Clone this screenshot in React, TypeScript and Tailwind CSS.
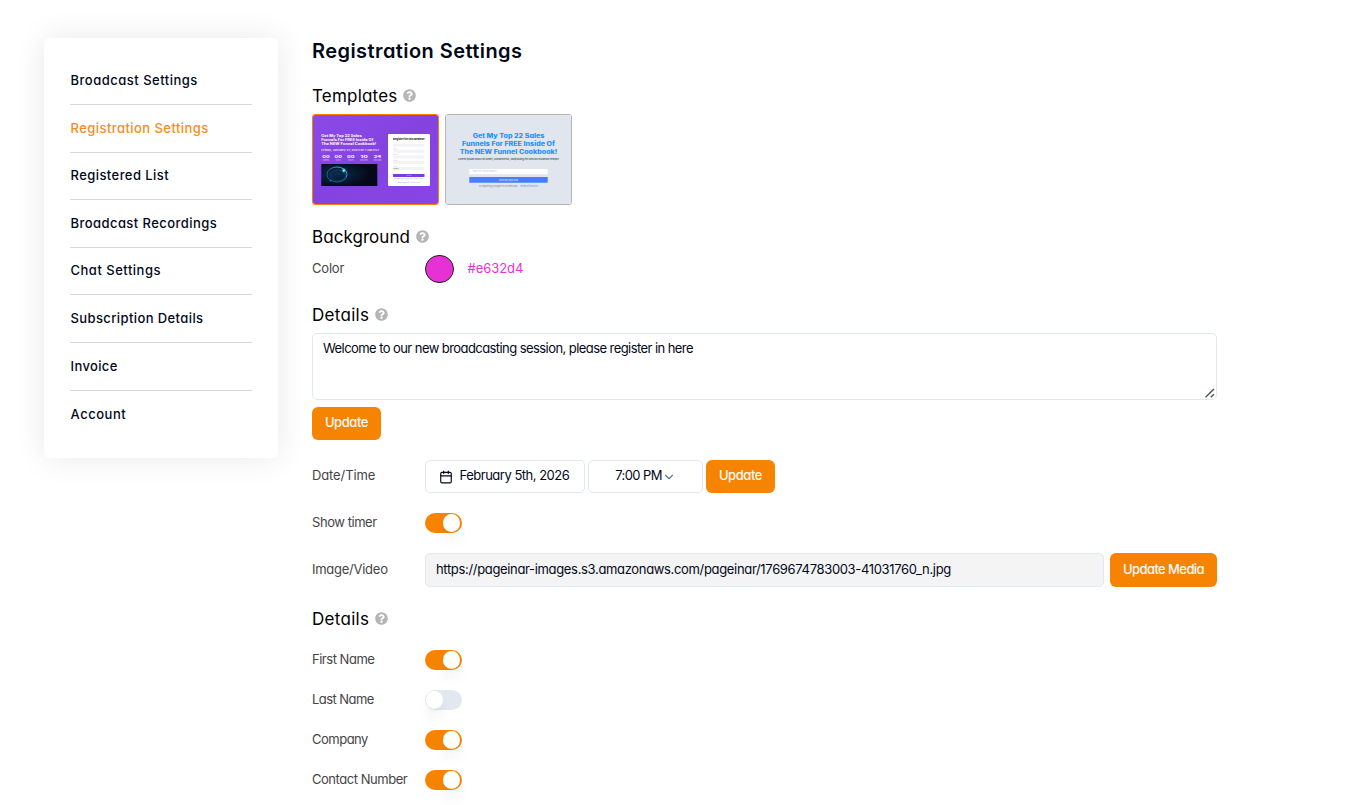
import { useState } from 'react'
import { Calendar, ChevronDown } from 'lucide-react'
import { FaQuestionCircle } from 'react-icons/fa'

const NAV_ITEMS = [
  { label: 'Broadcast Settings',    tracking: 'tracking-[0.5px]'  },
  { label: 'Registration Settings', tracking: 'tracking-[0.44px]' },
  { label: 'Registered List',       tracking: 'tracking-[0.43px]' },
  { label: 'Broadcast Recordings',  tracking: 'tracking-[0.44px]' },
  { label: 'Chat Settings',         tracking: 'tracking-[0.5px]'  },
  { label: 'Subscription Details',  tracking: 'tracking-[0.4px]'  },
  { label: 'Invoice',               tracking: 'tracking-[0.36px]' },
  { label: 'Account',               tracking: 'tracking-[0.52px]' },
]

const FIELDS = [
  { label: 'First Name',     on: true,  tracking: 'tracking-[-0.48px]' },
  { label: 'Last Name',      on: false, tracking: 'tracking-[-0.55px]' },
  { label: 'Company',        on: true,  tracking: 'tracking-[-0.5px]'  },
  { label: 'Contact Number', on: true,  tracking: 'tracking-[-0.46px]' },
]

const Heading = ({ children, className }: { children: string; className: string }) => (
  <h2 className="flex h-6 items-center gap-1.5 text-[17px] leading-6 text-black">
    <span className={className}>{children}</span>
    <FaQuestionCircle className="mb-px size-[13px] text-[#b5b5b5]" />
  </h2>
)

const Label = ({ children, className }: { children: string; className: string }) => (
  <span className={`w-[113px] shrink-0 whitespace-nowrap text-[#454545] ${className}`}>{children}</span>
)

const Button = ({ children, className }: { children: string; className: string }) => (
  <button className={`h-full shrink-0 rounded-md bg-[#f78400] pb-px text-center font-medium text-slate-50 ${className}`}>{children}</button>
)

const Toggle = ({ initial }: { initial: boolean }) => {
  const [on, setOn] = useState(initial)
  return (
    <button role="switch" aria-checked={on} onClick={() => setOn(!on)}
      className={`flex h-5 w-[37px] items-center rounded-full transition-colors ${on ? 'justify-end bg-[#f78400] pr-[2px]' : 'justify-start bg-slate-200 pl-px'}`}>
      <span className="size-[17.4px] rounded-full bg-white shadow-lg" />
    </button>
  )
}

const COUNTDOWN = [
  { x: 14, value: '00', unit: 'Weeks' },
  { x: 26.3, value: '00', unit: 'Days' },
  { x: 38.7, value: '00', unit: 'Hours' },
  { x: 52, value: '10', unit: 'Minutes' },
  { x: 65.5, value: '24', unit: 'Seconds' },
]

const PurpleTemplate = () => (
  <svg viewBox="1 1 125 89" className="size-full font-['Inter']">
    <defs>
      <radialGradient id="orb" cx="0.28" cy="0.45" r="0.6">
        <stop offset="0" stopColor="#0a2c4c" />
        <stop offset="0.5" stopColor="#071b34" />
        <stop offset="1" stopColor="#050817" />
      </radialGradient>
      <linearGradient id="ring" x1="1" y1="0" x2="0" y2="1">
        <stop offset="0" stopColor="#3fd5ee" />
        <stop offset="0.5" stopColor="#1a6d9c" />
        <stop offset="1" stopColor="#174a8c" />
      </linearGradient>
      <linearGradient id="purple" x1="0" y1="0" x2="1" y2="1">
        <stop offset="0" stopColor="#8c49e9" />
        <stop offset="0.5" stopColor="#8443df" />
        <stop offset="1" stopColor="#8945e6" />
      </linearGradient>
    </defs>
    <rect width="127" height="91" fill="url(#purple)" />
    <g fill="#f3eafd" fontSize="3.3" fontWeight="800">
      <text x="9.3" y="23.2" textLength="40.5" lengthAdjust="spacingAndGlyphs">Get My Top 22 Sales</text>
      <text x="9.3" y="27.3" textLength="52" lengthAdjust="spacingAndGlyphs">Funnels For FREE Inside Of</text>
      <text x="9.3" y="31.4" textLength="55" lengthAdjust="spacingAndGlyphs">The NEW Funnel Cookbook!</text>
      <text x="9.3" y="37.4" fontSize="2.6" fontWeight="600" textLength="58" lengthAdjust="spacingAndGlyphs">Friday, January 27, 2023 at 7 AM PST</text>
    </g>
    {COUNTDOWN.map(c => (
      <g key={c.x} fill="#f3eafd" textAnchor="middle">
        <text x={c.x} y="44" fontSize="4" fontWeight="800" textLength="7.5" lengthAdjust="spacingAndGlyphs">{c.value}</text>
        <text x={c.x} y="46.9" fontSize="2" opacity="0.65">{c.unit}</text>
      </g>
    ))}
    <rect x="9.3" y="50" width="56" height="22" fill="url(#orb)" />
    <ellipse cx="25" cy="60.5" rx="10" ry="7.5" fill="none" stroke="url(#ring)" strokeWidth="1" />
    <ellipse cx="26" cy="61.5" rx="7.5" ry="5.5" fill="none" stroke="#155a7e" strokeWidth="0.5" />
    <circle cx="31.8" cy="56.5" r="2.2" fill="#2fc7e8" opacity="0.5" />
    <circle cx="31.8" cy="56.5" r="1" fill="#b9f5ff" />
    <circle cx="18.5" cy="66.5" r="1" fill="#2a83e0" opacity="0.7" />
    <rect x="76" y="20" width="42" height="52" rx="1" fill="#fff" />
    <text x="81" y="26.4" fontSize="2.6" fontWeight="800" fill="#222" textLength="31.5" lengthAdjust="spacingAndGlyphs">Register for this webinar</text>
    {[29.7, 35.7, 41.4, 47, 53].map(y => (
      <rect key={y} x="81" y={y} width="31.5" height="3" rx="0.4" fill="#f3f3f6" />
    ))}
    {[34.7, 40.4, 46, 51.9].map(y => (
      <rect key={y} x="81.5" y={y} width="4" height="0.6" fill="#d5d5dc" />
    ))}
    <rect x="81.5" y="54.4" width="5" height="0.7" fill="#999" />
    <rect x="81" y="60" width="31.5" height="3" rx="0.4" fill="#7c3bdc" />
    <rect x="94.5" y="61.2" width="5" height="0.6" fill="#b795ec" />
    <g fontSize="1.6" fill="#8a8a94">
      <text x="82.5" y="65.1" textLength="18" lengthAdjust="spacingAndGlyphs">By registering you agree to our</text>
      <text x="102" y="65.1" fill="#7d9de8" textLength="9.5" lengthAdjust="spacingAndGlyphs">Terms of Service</text>
      <text x="86" y="69.1" textLength="11" lengthAdjust="spacingAndGlyphs">Already registered?</text>
      <text x="98.5" y="69.1" fill="#7d9de8" textLength="9.5" lengthAdjust="spacingAndGlyphs">Join the session</text>
    </g>
  </svg>
)

const LightTemplate = () => (
  <svg viewBox="1 1 125 89" className="size-full font-['Inter']">
    <rect width="127" height="91" fill="#e1e5ee" />
    <g fill="#1e90ff" fontSize="5.7" fontWeight="800">
      <text x="27.7" y="24.3" textLength="71.6" lengthAdjust="spacingAndGlyphs">Get My Top 22 Sales</text>
      <text x="17" y="32" textLength="93" lengthAdjust="spacingAndGlyphs">Funnels For FREE Inside Of</text>
      <text x="14.7" y="39.7" textLength="97.6" lengthAdjust="spacingAndGlyphs">The NEW Funnel Cookbook!</text>
    </g>
    <text x="13" y="46.3" fontSize="2.1" fontWeight="600" fill="#4b4f58" textLength="101" lengthAdjust="spacingAndGlyphs">Lorem ipsum dolor sit amet, consectetur, adipiscing elit sed do eiusmod tempor</text>
    <rect x="24.3" y="55" width="78.4" height="5.2" rx="0.4" fill="#fff" />
    <text x="27.5" y="58.4" fontSize="2" fill="#c3c5cc" textLength="24" lengthAdjust="spacingAndGlyphs">Enter your email address</text>
    <rect x="24.3" y="63" width="78.4" height="5.8" rx="0.4" fill="#4a7dfc" />
    <text x="54" y="66.7" fontSize="2" fontWeight="700" fill="#c6d6ff" textLength="19" lengthAdjust="spacingAndGlyphs">Save My Spot Now</text>
    <text x="34.3" y="73" fontSize="1.9" fill="#7b7f8a" textLength="38" lengthAdjust="spacingAndGlyphs">By registering you agree to our terms and</text>
    <text x="75" y="73" fontSize="1.9" fill="#5a86ee" textLength="17.7" lengthAdjust="spacingAndGlyphs">Terms of Service</text>
  </svg>
)

export default function App() {
  const [active, setActive] = useState('Registration Settings')

  return (
    <div className="flex h-[805px] w-full items-start overflow-hidden bg-white pl-11 font-['Inter',sans-serif] text-[13px] text-[#020817] [font-feature-settings:'cv11']">
      <nav className="mt-[38px] h-[420px] w-[234px] shrink-0 rounded-md bg-white px-[26px] pt-[19.4px] shadow-[0_0_32px_rgba(0,0,0,0.09)]">
        {NAV_ITEMS.map(item => (
          <button key={item.label} onClick={() => setActive(item.label)}
            className={`block h-[47.6px] w-full whitespace-nowrap border-b border-[#d8d8d8] pl-[0.5px] text-left font-medium last:border-b-0
              ${active === item.label ? 'text-[#f78d1a]' : ''} ${item.tracking}`}>
            {item.label}
          </button>
        ))}
      </nav>

      <main className="ml-[34px] w-[905px] shrink-0 pt-9">
        <h1 className="h-[30px] text-xl leading-[30px] font-semibold tracking-[0.43px]">Registration Settings</h1>

        <div className="mt-[18px]">
          <Heading className="tracking-[0.2px]">Templates</Heading>
          <div className="mt-1.5 flex gap-1.5">
            <button className="h-[91px] w-[127px] overflow-hidden rounded-[3px] border border-[#f78400]"><PurpleTemplate /></button>
            <button className="h-[91px] w-[127px] overflow-hidden rounded-[3px] border border-[#b5b5b5]"><LightTemplate /></button>
          </div>
        </div>

        <div className="mt-5">
          <Heading className="tracking-[0.06px]">Background</Heading>
          <div className="mt-1.5 flex h-7 items-center">
            <Label className="tracking-[-0.2px]">Color</Label>
            <span className="h-7 w-[29px] rounded-full border border-[#222] bg-[#e632d4]" />
            <span className="ml-[13.5px] tracking-[-0.05px] text-[#e632d4]">#e632d4</span>
          </div>
        </div>

        <div className="mt-5">
          <Heading className="tracking-[0.3px]">Details</Heading>
          <div className="relative mt-1.5 h-[67px]">
            <textarea
              defaultValue="Welcome to our new broadcasting session, please register in here"
              className="block size-full resize-none rounded-[5px] border border-slate-200 px-2.5 py-1 leading-5 tracking-[-0.57px] outline-none"
            />
            {/* resize grip */}
            <svg viewBox="0 0 10 10" className="pointer-events-none absolute right-[2px] bottom-[2px] size-2.5" stroke="#4a4a4a" strokeWidth="1.3">
              <path d="M0.5 9.3 9 1M5.7 9.3 9 6.2" />
            </svg>
          </div>
          <div className="mt-[7px] h-[33px]">
            <Button className="w-[69px] tracking-[-0.42px]">Update</Button>
          </div>
        </div>

        <div className="mt-5 flex h-[33px] items-center">
          <Label className="pb-px tracking-[-0.12px]">Date/Time</Label>
          <button className="flex h-full w-40 items-center rounded-[5px] border border-slate-200 pl-[13px] whitespace-nowrap">
            <Calendar size={14} strokeWidth={2} className="mr-[6.5px]" />
            <span className="pb-px tracking-[-0.49px]">February 5th, 2026</span>
          </button>
          <button className="ml-[3px] flex h-full w-[115px] items-center justify-center rounded-[5px] border border-slate-200 whitespace-nowrap">
            <span className="pb-px tracking-[-0.6px]">7:00 PM</span>
            <ChevronDown size={14} className="text-slate-500" />
          </button>
          <div className="ml-[3px] h-full">
            <Button className="w-[69px] tracking-[-0.42px]">Update</Button>
          </div>
        </div>

        <div className="mt-5 flex h-5 items-center">
          <Label className="tracking-[-0.45px]">Show timer</Label>
          <Toggle initial={true} />
        </div>

        <div className="mt-5 flex h-[34px] items-center">
          <Label className="tracking-[-0.26px]">Image/Video</Label>
          <input readOnly
            value="https://pageinar-images.s3.amazonaws.com/pageinar/1769674783003-41031760_n.jpg"
            className="h-full w-[679px] rounded-[5px] border border-slate-200 bg-[#f4f4f4] px-2.5 pb-[3px] tracking-[-0.335px] outline-none"
          />
          <div className="ml-1.5 h-full">
            <Button className="w-[107px] tracking-[-0.58px]">Update Media</Button>
          </div>
        </div>

        <div className="mt-5">
          <Heading className="tracking-[0.3px]">Details</Heading>
          <div className="mt-[19px] flex flex-col gap-5">
            {FIELDS.map(field => (
              <div key={field.label} className="flex h-5 items-center">
                <Label className={field.tracking}>{field.label}</Label>
                <Toggle initial={field.on} />
              </div>
            ))}
          </div>
        </div>
      </main>
    </div>
  )
}
